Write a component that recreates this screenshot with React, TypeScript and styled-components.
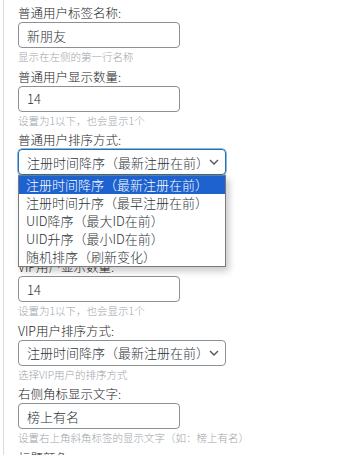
import { createGlobalStyle } from "styled-components";
import styled from "styled-components";

const GlobalStyle = createGlobalStyle`
  html, body {
    margin: 0;
    padding: 0;
    background: #ffffff;
    font-family: "Noto Sans CJK SC", "Noto Sans", sans-serif;
    font-weight: 300;
    overflow: hidden;
  }
`;

const Page = styled.main`
  margin-left: 3px;
  padding: 4px 0 0 14px;
  border-left: 1px solid #dcdcde;
  min-height: 455px;
  box-sizing: border-box;
`;

const Field = styled.div`
  position: relative;
  display: flex;
  flex-direction: column;
  align-items: flex-start;
  margin-bottom: 3.5px;
`;

const Label = styled.label`
  height: 18px;
  line-height: 18px;
  font-size: 12.5px;
  color: #1d2327;
`;

const TextInput = styled.div`
  width: 162px;
  height: 26px;
  box-sizing: border-box;
  display: flex;
  align-items: center;
  padding: 0 8px;
  border: 1px solid #8c8f94;
  border-radius: 4px;
  font-size: 13px;
  color: #2c3338;
`;

const Select = styled.div<{ $focused?: boolean }>`
  width: 208px;
  height: 26px;
  box-sizing: border-box;
  display: flex;
  align-items: center;
  justify-content: space-between;
  padding: 0 8px 0 8px;
  border: 1px solid ${(p) => (p.$focused ? "#2271b1" : "#8c8f94")};
  box-shadow: ${(p) => (p.$focused ? "0 0 0 0.5px #2271b1" : "none")};
  border-radius: 4px;
  font-size: 13px;
  color: #2c3338;
  white-space: nowrap;
`;

const Chevron = styled.svg`
  flex: none;
  margin-right: 6px;
`;

const Desc = styled.p`
  margin: 2px 0 0;
  height: 14px;
  line-height: 14px;
  font-size: 10.5px;
  color: #a0a5aa;
  white-space: nowrap;
`;

const Menu = styled.ul`
  position: absolute;
  z-index: 10;
  top: 44px;
  left: 0;
  width: 208px;
  box-sizing: border-box;
  margin: 0;
  padding: 0;
  list-style: none;
  background: #ffffff;
  border: 1px solid #7a7a7a;
  box-shadow: 3px 4px 7px rgba(0, 0, 0, 0.22);
`;

const MenuItem = styled.li<{ $active?: boolean }>`
  height: 18px;
  line-height: 18px;
  padding: 0 7px;
  font-size: 13px;
  white-space: nowrap;
  background: ${(p) => (p.$active ? "#1e62d0" : "transparent")};
  color: ${(p) => (p.$active ? "#ffffff" : "#2c3338")};
`;

const sortOptions = [
  "注册时间降序（最新注册在前）",
  "注册时间升序（最早注册在前）",
  "UID降序（最大ID在前）",
  "UID升序（最小ID在前）",
  "随机排序（刷新变化）",
];

const ChevronIcon = () => (
  <Chevron width="10" height="6" viewBox="0 0 10 6">
    <path d="M1 1l4 4 4-4" fill="none" stroke="#50575e" strokeWidth="1.4" />
  </Chevron>
);

const App = () => (
  <>
    <GlobalStyle />
    <Page>
      <Field>
        <Label>普通用户标签名称:</Label>
        <TextInput>新朋友</TextInput>
        <Desc>显示在左侧的第一行名称</Desc>
      </Field>
      <Field>
        <Label>普通用户显示数量:</Label>
        <TextInput>14</TextInput>
        <Desc>设置为1以下，也会显示1个</Desc>
      </Field>
      <Field>
        <Label>普通用户排序方式:</Label>
        <Select $focused>
          {sortOptions[0]}
          <ChevronIcon />
        </Select>
        <Desc>选择普通用户的排序方式</Desc>
        <Menu>
          {sortOptions.map((opt, i) => (
            <MenuItem key={opt} $active={i === 0}>
              {opt}
            </MenuItem>
          ))}
        </Menu>
      </Field>
      <Field>
        <Label>VIP用户标签名称:</Label>
        <TextInput>VIP</TextInput>
        <Desc>显示在左侧的第一行名称</Desc>
      </Field>
      <Field>
        <Label>VIP用户显示数量:</Label>
        <TextInput>14</TextInput>
        <Desc>设置为1以下，也会显示1个</Desc>
      </Field>
      <Field>
        <Label>VIP用户排序方式:</Label>
        <Select>
          {sortOptions[0]}
          <ChevronIcon />
        </Select>
        <Desc>选择VIP用户的排序方式</Desc>
      </Field>
      <Field>
        <Label>右侧角标显示文字:</Label>
        <TextInput>榜上有名</TextInput>
        <Desc>设置右上角斜角标签的显示文字（如：榜上有名）</Desc>
      </Field>
      <Field>
        <Label>标题颜色:</Label>
      </Field>
    </Page>
  </>
);

export default App;
